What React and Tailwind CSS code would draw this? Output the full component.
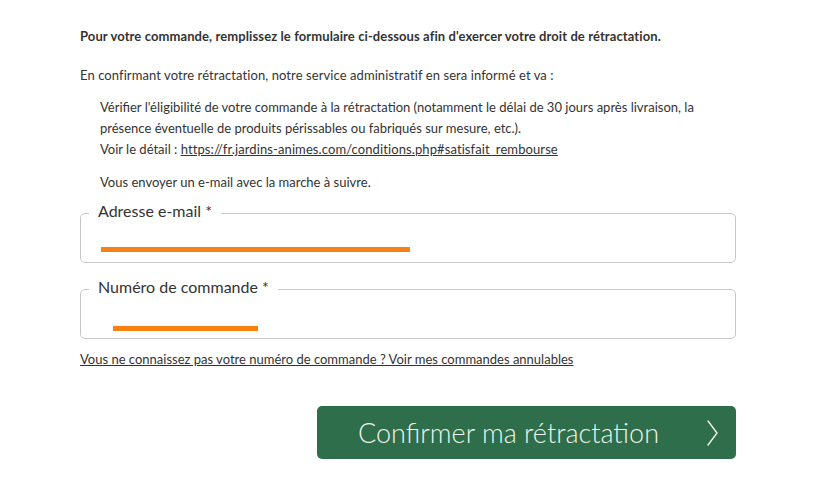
const font = { fontFamily: 'Lato, "Open Sans", sans-serif' };

function Field({ label, barClass }) {
    return (
        <fieldset className="border border-[#c8c8c8] rounded-[5px] h-[61px] px-0 m-0">
            <legend className="ml-[8px] px-[9px] pb-[4px] text-[16px] leading-[18px] text-[#333]">{label}</legend>
            <div className={barClass} />
        </fieldset>
    );
}

export default function App() {
    return (
        <div className="w-[823px] h-[494px] bg-white text-[#333]" style={font}>
            <div className="ml-[80px] w-[656px] pt-[28px]">
                <p className="text-[13px] font-bold leading-[16px] tracking-[0.1px]">
                    Pour votre commande, remplissez le formulaire ci-dessous afin d'exercer votre droit de rétractation.
                </p>
                <p className="text-[13px] leading-[16px] mt-[23px] tracking-[0.08px]">
                    En confirmant votre rétractation, notre service administratif en sera informé et va :
                </p>
                <div className="pl-[20px] text-[13px] mt-[14px]">
                    <p className="leading-[21px]">
                        Vérifier l'éligibilité de votre commande à la rétractation (notamment le délai de 30 jours après livraison, la
                        <br />
                        présence éventuelle de produits périssables ou fabriqués sur mesure, etc.).
                        <br />
                        Voir le détail : <a className="underline tracking-[0.1px]" href="#">https://fr.jardins-animes.com/conditions.php#satisfait_rembourse</a>
                    </p>
                    <p className="leading-[16px] mt-[14px]">Vous envoyer un e-mail avec la marche à suivre.</p>
                </div>

                <div className="mt-[12px] flex flex-col gap-[15px]">
                    <Field label="Adresse e-mail *" barClass="ml-[20px] mt-[23px] w-[309px] h-[5px] bg-[#f98012]" />
                    <Field label="Numéro de commande *" barClass="ml-[32px] mt-[26px] w-[145px] h-[5px] bg-[#f98012]" />
                </div>

                <a href="#" className="block mt-[12px] text-[13px] leading-[16px] underline text-[#333]">
                    Vous ne connaissez pas votre numéro de commande ? Voir mes commandes annulables
                </a>

                <div className="flex justify-end mt-[39px]">
                    <button className="w-[419px] h-[53px] rounded-[5px] bg-[#2e6e4a] text-[#eef4ee] flex items-center pl-[41px] pr-[18px]">
                        <span className="text-[27px] font-light flex-1 text-left leading-[32px]">Confirmer ma rétractation</span>
                        <svg width="11" height="26" viewBox="0 0 11 26" fill="none" stroke="currentColor" strokeWidth="1.4" strokeLinecap="round" strokeLinejoin="round">
                            <polyline points="1,1 10,13 1,25" />
                        </svg>
                    </button>
                </div>
            </div>
        </div>
    );
}
